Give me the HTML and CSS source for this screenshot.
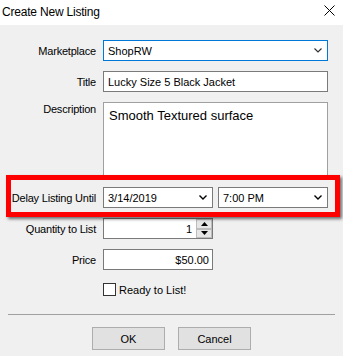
FILE: index.html
```html
<!DOCTYPE html>
<html>
<head>
<meta charset="utf-8">
<link rel="stylesheet" href="styles.css">
</head>
<body>
<div class="window">
  <div class="titlebar">
    <span class="title">Create New Listing</span>
    <svg class="close" width="11" height="11" viewBox="0 0 11 11"><path d="M0.5 0.5 L10.5 10.5 M10.5 0.5 L0.5 10.5" stroke="#000" stroke-width="1" fill="none"/></svg>
  </div>
  <div class="body">
    <div class="form">
      <div class="label">Marketplace</div>
      <div class="field select focused"><span>ShopRW</span><svg class="chev" width="8" height="5" viewBox="0 0 8 5"><path d="M0.5 0.5 L4 4 L7.5 0.5" stroke="#333" stroke-width="1.2" fill="none"/></svg></div>

      <div class="label">Title</div>
      <div class="field input"><span>Lucky Size 5 Black Jacket</span></div>

      <div class="label top">Description</div>
      <div class="field textarea">Smooth Textured surface</div>

      <div class="label">Delay Listing Until</div>
      <div class="pair">
        <div class="field select"><span>3/14/2019</span><svg class="chev" width="8" height="5" viewBox="0 0 8 5"><path d="M0.5 0.5 L4 4 L7.5 0.5" stroke="#000" stroke-width="1.4" fill="none"/></svg></div>
        <div class="field select"><span>7:00 PM</span><svg class="chev" width="8" height="5" viewBox="0 0 8 5"><path d="M0.5 0.5 L4 4 L7.5 0.5" stroke="#000" stroke-width="1.4" fill="none"/></svg></div>
      </div>

      <div class="label">Quantity to List</div>
      <div class="field input short num"><span class="val">1</span>
        <div class="spin">
          <div class="sbtn"><svg width="7" height="4" viewBox="0 0 7 4"><path d="M0 4 L3.5 0 L7 4 Z" fill="#000"/></svg></div>
          <div class="sbtn"><svg width="7" height="4" viewBox="0 0 7 4"><path d="M0 0 L3.5 4 L7 0 Z" fill="#000"/></svg></div>
        </div>
      </div>

      <div class="label">Price</div>
      <div class="field input short num"><span class="val pr">$50.00</span></div>

      <div class="label empty"></div>
      <div class="check"><span class="box"></span><span>Ready to List!</span></div>
    </div>
    <div class="sep"></div>
    <div class="buttons">
      <div class="btn">OK</div>
      <div class="btn">Cancel</div>
    </div>
  </div>
  <div class="highlight"></div>
</div>
</body>
</html>
```
FILE: styles.css
```css
html, body {
  margin: 0;
  padding: 0;
}
body {
  width: 343px;
  height: 356px;
  background: #f0f0f0;
  font-family: "Liberation Sans", Arial, sans-serif;
  font-size: 11px;
  color: #000;
  overflow: hidden;
}
.window {
  position: relative;
  width: 343px;
  height: 356px;
}
.titlebar {
  height: 25px;
  background: #fff;
  display: flex;
  align-items: center;
  justify-content: space-between;
  padding: 0 8px 0 2px;
  box-sizing: border-box;
}
.title {
  font-size: 12px;
  letter-spacing: -0.2px;
  padding-bottom: 2px;
}
.close {
  margin-bottom: 4px;
}
.body {
  padding-top: 15px;
}
.form {
  display: grid;
  grid-template-columns: 96px 225px;
  column-gap: 7px;
  row-gap: 10px;
}
.label {
  text-align: right;
  display: flex;
  align-items: center;
  justify-content: flex-end;
  height: 21px;
  letter-spacing: -0.2px;
}
.label.top {
  align-items: flex-start;
  padding-top: 1px;
}
.label.empty {
  height: 13px;
}
.field {
  box-sizing: border-box;
  height: 21px;
  border: 1px solid #7a7a7a;
  background: #fff;
  display: flex;
  align-items: center;
  padding: 0 4px;
}
.field.focused {
  border-color: #0078d7;
}
.select {
  justify-content: space-between;
  padding-right: 5px;
}
.textarea {
  height: 75px;
  align-items: flex-start;
  font-size: 13px;
  padding: 5px 5px;
  border-color: #a0a0a0;
}
.pair {
  display: flex;
  gap: 5px;
}
.pair .field {
  width: 110px;
}
.short {
  width: 110px;
}
.num {
  justify-content: flex-end;
  padding-right: 3px;
}
.num .val {
  padding-right: 4px;
}
.num .val.pr {
  padding-right: 0;
}
.spin {
  display: flex;
  flex-direction: column;
  width: 16px;
  height: 19px;
  margin-right: -3px;
}
.sbtn {
  flex: 1;
  background: #e6e6e6;
  border: 1px solid #bcbcbc;
  display: flex;
  align-items: center;
  justify-content: center;
}
.check {
  display: flex;
  align-items: center;
  gap: 3px;
  height: 13px;
  margin-top: 3px;
}
.box {
  width: 13px;
  height: 13px;
  box-sizing: border-box;
  border: 1px solid #333;
  background: #fff;
}
.sep {
  margin: 18px 8px 0 8px;
  height: 1px;
  background: #a0a0a0;
}
.buttons {
  display: flex;
  gap: 13px;
  padding-left: 92px;
  margin-top: 12px;
}
.btn {
  width: 73px;
  height: 23px;
  box-sizing: border-box;
  background: #e1e1e1;
  border: 1px solid #adadad;
  display: flex;
  align-items: center;
  justify-content: center;
}
.highlight {
  position: absolute;
  left: 6px;
  top: 175px;
  width: 334px;
  height: 42px;
  box-sizing: border-box;
  border: 5px solid #ff0000;
  box-shadow: 2px 2px 3px rgba(0,0,0,0.55);
}
```
